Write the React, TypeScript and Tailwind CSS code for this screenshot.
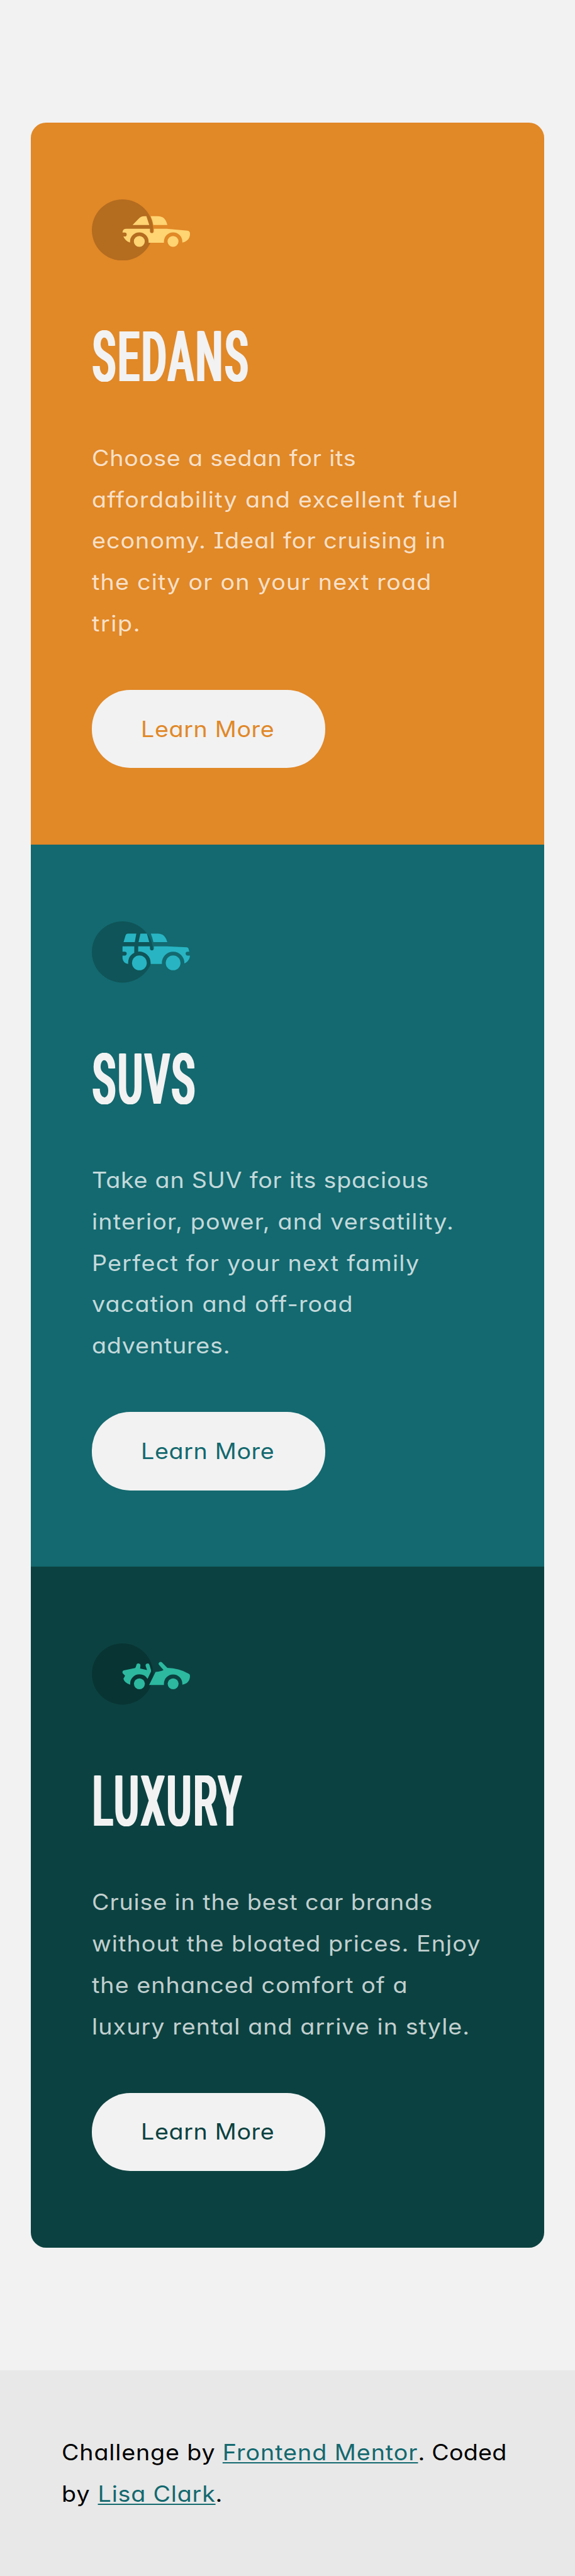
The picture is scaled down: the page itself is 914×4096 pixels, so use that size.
import type { ReactNode } from "react";

type Line = { text: string; tracking: string };

type Car = {
  name: string;
  nameClass: string;
  cardClass: string;
  buttonClass: string;
  lines: Line[];
  icon: ReactNode;
};

function SedanIcon() {
  return (
    <svg viewBox="60 60 576 360" className="block h-[97.5px] w-[156px]" aria-hidden="true">
      <circle cx="240" cy="240" r="180" fill="#000" fillOpacity=".2" />
      <g fill="#ffd473">
        <path d="M299 210 L333 175 Q348 159 368 159 H380 L397 210 Z" />
        <path d="M405 159 H445 C480 159 495 178 503 210 H421 Q417 183 405 159 Z" />
        <path d="M262 233 H401 V246 a11.5 11.5 0 0 0 23 0 V233 H500 L621 244 Q636 246 636 262 Q636 302 591 314 V308 a54 54 0 0 0 -108 0 V315 H393 V308 a54.5 54.5 0 0 0 -109 0 V314 Q257 306 245 278 H253 a11.5 11.5 0 0 0 0 -23 H240 V253 Q242 233 262 233 Z" />
        <circle cx="338.500" cy="307" r="32" />
        <circle cx="536.500" cy="307" r="32" />
      </g>
    </svg>
  );
}

function SuvIcon() {
  return (
    <svg viewBox="60 69 576 360" className="block h-[97.5px] w-[156px]" aria-hidden="true">
      <circle cx="240" cy="249" r="180" fill="#000" fillOpacity=".2" />
      <g fill="#28b4c3">
        <path d="M246 191 L258 151 Q261 141 271 141 H321 L312 191 Z" />
        <path d="M345 141 H383 L397 191 H334 Z" />
        <path d="M406 141 H445 C480 141 493 160 503 191 H421 Q416 165 406 141 Z" />
        <path d="M240 216 H309 V254 Q273 272 273 313 V319 Q240 314 240 281 V270 H253 a11.500 11.500 0 0 0 0 -23 H240 Z" />
        <path d="M332 216 H401 V228 a11.500 11.500 0 0 0 23 0 V216 H500 L618 221 Q625 222 627 229 L632 247 H622 a11.500 11.500 0 0 0 0 23 H636 Q634 302 603 316 V313 a66 66 0 0 0 -132 0 V319 H405 V313 A66 66 0 0 0 332 247 Z" />
        <circle cx="339" cy="313" r="43.500" />
        <circle cx="537" cy="313" r="43.500" />
      </g>
    </svg>
  );
}

function LuxuryIcon() {
  return (
    <svg viewBox="60 78 576 360" className="block h-[97.5px] w-[156px]" aria-hidden="true">
      <circle cx="240" cy="258" r="180" fill="#000" fillOpacity=".2" />
      <g fill="#2cb9a0">
        <path d="M248 237 L314 223 Q318 219 321 207 a12 12 0 0 1 24 3 Q345 218 343 226 L384 235 L376 212 a11.700 11.700 0 0 1 22.500 -7 L407 235 V244 L387 287 Q372 260 339 260 A54 54 0 0 0 285 315 V321 Q254 312 245 287 L255 268 L240 252 Q238 239 248 237 Z" />
        <path d="M434 246 Q460 245 481 235 L453 203 a11.500 11.500 0 0 1 17 -14 L503 222 Q570 223 628 256 Q636 260 636 268 Q636 312 591 321 V315 a54 54 0 0 0 -108 0 V323 H396 Z" />
        <circle cx="339" cy="315.500" r="32" />
        <circle cx="537" cy="315.500" r="32" />
      </g>
    </svg>
  );
}

const cars: Car[] = [
  {
    name: "SEDANS",
    nameClass: "scale-x-[0.539]",
    cardClass: "bg-[#e18827]",
    buttonClass: "text-[#e18827]",
    icon: <SedanIcon />,
    lines: [
      { text: "Choose a sedan for its", tracking: "tracking-[0.75px]" },
      { text: "affordability and excellent fuel", tracking: "tracking-[1.21px]" },
      { text: "economy. Ideal for cruising in", tracking: "tracking-[0.96px]" },
      { text: "the city or on your next road", tracking: "tracking-[1.14px]" },
      { text: "trip.", tracking: "tracking-[1.5px]" },
    ],
  },
  {
    name: "SUVS",
    nameClass: "scale-x-[0.539]",
    cardClass: "bg-[#13696f]",
    buttonClass: "text-[#13696f]",
    icon: <SuvIcon />,
    lines: [
      { text: "Take an SUV for its spacious", tracking: "tracking-[0.72px]" },
      { text: "interior, power, and versatility.", tracking: "tracking-[1.11px]" },
      { text: "Perfect for your next family", tracking: "tracking-[1.18px]" },
      { text: "vacation and off-road", tracking: "tracking-[1.09px]" },
      { text: "adventures.", tracking: "tracking-[0.74px]" },
    ],
  },
  {
    name: "LUXURY",
    nameClass: "scale-x-[0.531]",
    cardClass: "bg-[#0b4241]",
    buttonClass: "text-[#0b4241]",
    icon: <LuxuryIcon />,
    lines: [
      { text: "Cruise in the best car brands", tracking: "tracking-[0.82px]" },
      { text: "without the bloated prices. Enjoy", tracking: "tracking-[0.99px]" },
      { text: "the enhanced comfort of a", tracking: "tracking-[0.98px]" },
      { text: "luxury rental and arrive in style.", tracking: "tracking-[1px]" },
    ],
  },
];

function CarCard({ car }: { car: Car }) {
  return (
    <section className={`flex flex-col items-start px-[97.5px] py-[121.9px] ${car.cardClass}`}>
      {car.icon}
      <h2
        className={`mt-[104px] mb-[77.4px] h-[100px] origin-left pl-[2px] font-['Roboto',sans-serif] text-[111.6px] leading-[100px] font-medium tracking-[7px] whitespace-nowrap text-[#f2f2f2] [text-shadow:-3.5px_0_0_#f2f2f2,-2px_0_0_#f2f2f2,-1px_0_0_#f2f2f2,1px_0_0_#f2f2f2,2px_0_0_#f2f2f2,3.5px_0_0_#f2f2f2] ${car.nameClass}`}
      >
        {car.name}
      </h2>
      <p className="origin-left scale-x-[1.07] leading-[65.83px] whitespace-nowrap text-white/75">
        {car.lines.map((line) => (
          <span key={line.text} className={`block ${line.tracking}`}>
            {line.text}
          </span>
        ))}
      </p>
      <button
        type="button"
        className={`mt-[72.1px] h-[124.3px] w-[370.5px] rounded-[61px] bg-[#f2f2f2] pl-[78px] text-left whitespace-nowrap ${car.buttonClass}`}
      >
        <span className="inline-block origin-left scale-x-[1.07] tracking-[0.6px]">Learn More</span>
      </button>
    </section>
  );
}

export default function App() {
  return (
    <div className="flex h-[4096px] w-[914px] flex-col overflow-hidden bg-[#f2f2f2] font-['Inter',sans-serif] text-[35.2px] [font-feature-settings:'cv11','cv08']">
      <main className="px-[48.75px] py-[195px]">
        <div className="overflow-hidden rounded-[24.4px]">
          {cars.map((car) => (
            <CarCard key={car.name} car={car} />
          ))}
        </div>
      </main>
      <footer className="grow bg-[#e8e8e8] px-[97.5px] pt-[98.5px] leading-[65.83px] whitespace-nowrap text-black">
        <p className="origin-left scale-x-[1.07]">
          <span className="tracking-[0.78px]">Challenge by </span>
          <a href="#mentor" className="tracking-[0.9px] text-[#13696f] underline decoration-[2.4px] underline-offset-[3px]">
            Frontend Mentor
          </a>
          <span className="tracking-[0.2px]">. Coded</span>
          <br />
          <span className="tracking-[1.08px]">by </span>
          <a href="#author" className="tracking-[0.75px] text-[#13696f] underline decoration-[2.4px] underline-offset-[3px]">
            Lisa Clark
          </a>
          .
        </p>
      </footer>
    </div>
  );
}
